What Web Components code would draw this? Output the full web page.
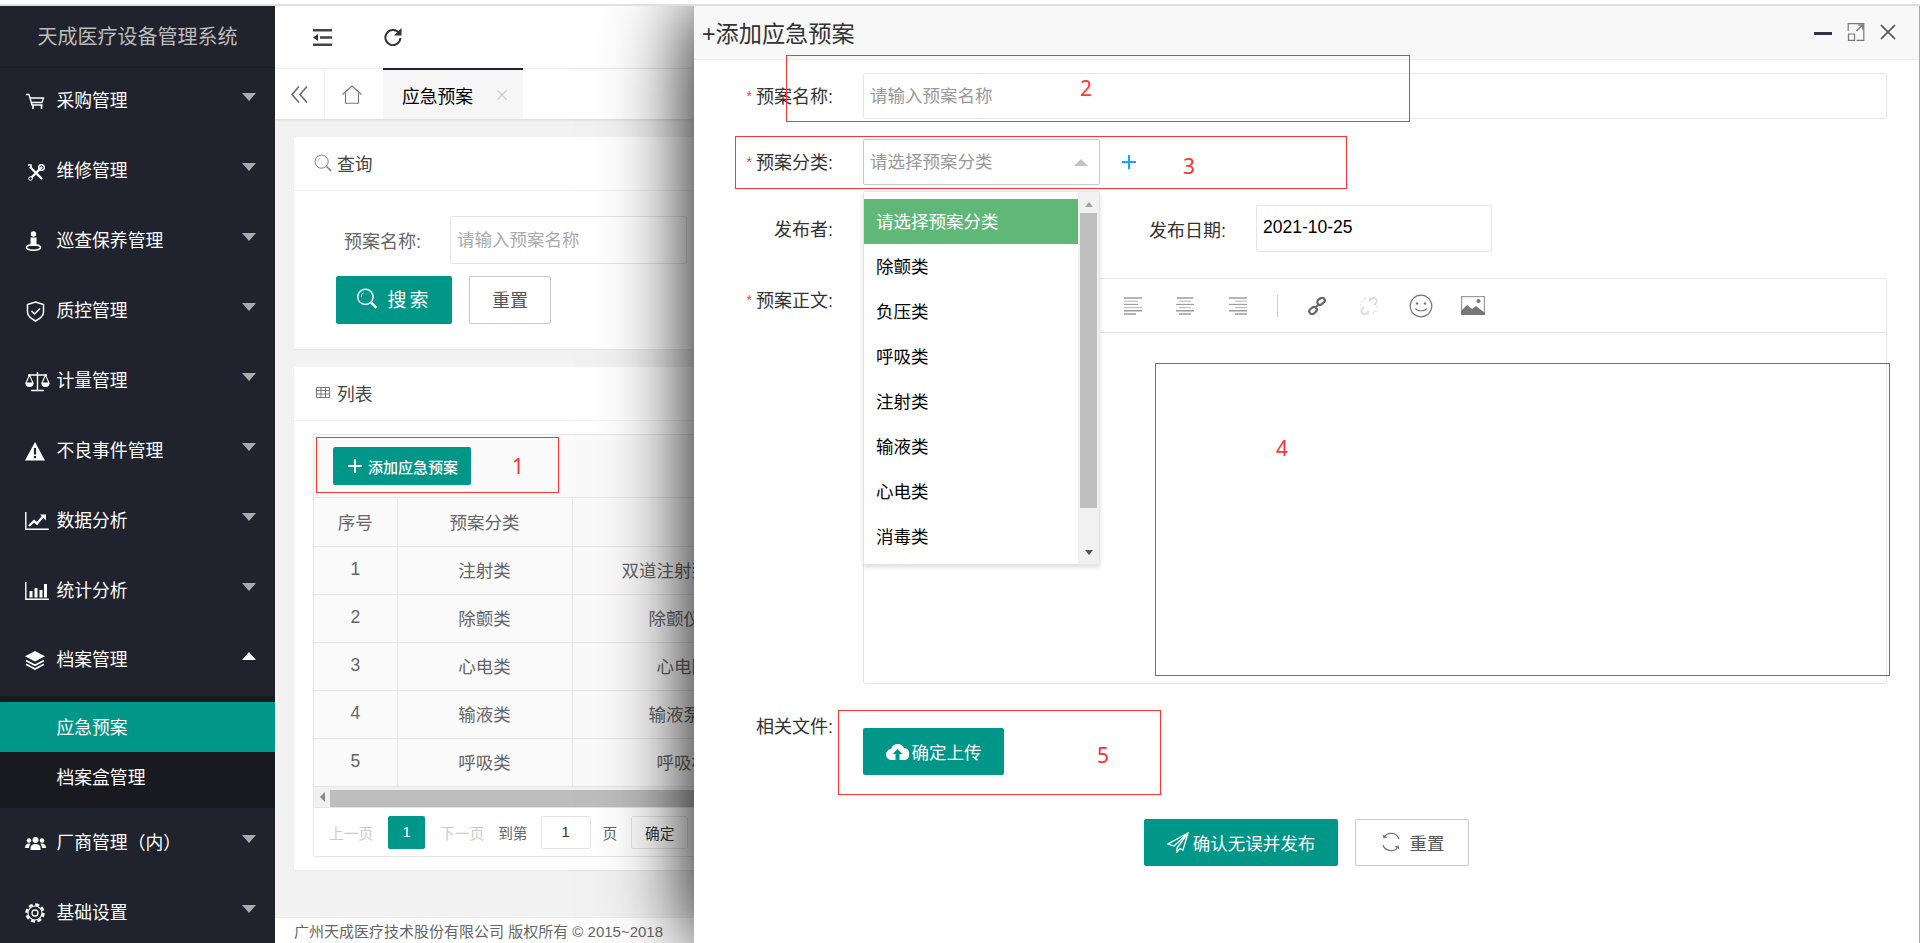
<!DOCTYPE html>
<html lang="zh-CN"><head><meta charset="utf-8"><title>应急预案</title>
<style>
html,body{margin:0;height:943px;overflow:hidden;background:#fff;font-family:"Liberation Sans","Noto Sans CJK SC",sans-serif;font-size:17.5px;}
</style></head><body>
<app-shell></app-shell>
<script>
function def(name,css,html){
  customElements.define(name,class extends HTMLElement{
    connectedCallback(){
      if(this.shadowRoot)return;
      const r=this.attachShadow({mode:'open'});
      r.innerHTML='<style>'+css+'</style>'+(typeof html==='function'?html(this):html);
    }
  });
}
const s=(w,h,b,st='')=>`<svg width="${w}" height="${h}" viewBox="0 0 ${w} ${h}" style="display:block;${st}">${b}</svg>`;
const ln='fill="none" stroke="#fff"';
const ICONS={
 cart:s(20,18,`<path d="M1 1.500h3l3 10.500h10.500M5 5h13.500l-1.500 4.500H6.500" ${ln} stroke-width="1.300"/><path d="M8 12v4M16.500 12v4" ${ln} stroke-width="1.600"/>`,'margin-top:1px'),
 tools:s(18,17,`<path d="M3 3l12 12M15 3L3 15" ${ln} stroke-width="2.400"/><path d="M1 1l3 0 0 3" ${ln} stroke-width="1.500"/><circle cx="14.500" cy="3.500" r="2.800" ${ln} stroke-width="1.500"/><circle cx="3.500" cy="14.500" r="1.800" fill="#20232d" stroke="#fff"/>`,'margin-left:2px;margin-top:2px'),
 person:s(17,20,`<circle cx="8.500" cy="3" r="2.700" fill="#fff"/><rect x="5.500" y="6.500" width="6" height="8.500" fill="#fff"/><ellipse cx="8.500" cy="16.500" rx="7" ry="2.700" ${ln} stroke-width="1.500"/>`),
 shield:s(19,21,`<path d="M9.500 1L17.500 3.500V11c0 4-4 7-8 9C5.500 18 1.500 15 1.500 11V3.500z" ${ln} stroke-width="1.500"/><path d="M5.500 10l3 3 5.500-5.500" ${ln} stroke-width="1.500"/>`,'margin-left:1px'),
 scale:s(25,21,`<path d="M12.500 1v18M6 19.500h13M3 4h19" ${ln} stroke-width="1.400"/><path d="M4.500 4L1 12h7zM20.500 4L17 12h7z" ${ln} stroke-width="1.100"/><path d="M.5 12a4 4 0 0 0 8 0zM16.500 12a4 4 0 0 0 8 0z" fill="#fff"/>`),
 warn:s(20,19,`<path d="M10 0L20 18.500H0z" fill="#fff"/><path d="M8.900 6h2.200v6.500H8.900zM8.900 14h2.200v2.200H8.900z" fill="#20232d"/>`),
 chart:s(24,18,`<path d="M.8 0v17.200H24" ${ln} stroke-width="1.400"/><path d="M4 14l5-5 3 2.500 6-7" ${ln} stroke-width="2.400"/><path d="M15 2.500h6v6z" fill="#fff"/>`),
 bars:s(24,18,`<path d="M.8 0v17.200H24" ${ln} stroke-width="1.400"/><path d="M4.500 9h3v6.500h-3zM9.500 6h3v9.500h-3zM14.500 8h3v7.500h-3zM19 2h3v13.500h-3z" fill="#fff"/>`),
 layers:s(20,19,`<path d="M10 0L20 5.200 10 10.500 0 5.200z" fill="#fff"/><path d="M1 9.500l9 4.700 9-4.700M1 13.300l9 4.700 9-4.700" ${ln} stroke-width="1.700"/>`),
 users:s(21,13,`<circle cx="10.500" cy="3" r="3" fill="#fff"/><circle cx="4" cy="3.500" r="2.300" fill="#fff"/><circle cx="17" cy="3.500" r="2.300" fill="#fff"/><path d="M5.500 13v-2c0-2.500 2-4 5-4s5 1.500 5 4v2zM0 11c0-3 1.500-4.500 4-4.500 .8 0 1.200.2 1.500.4C4.500 8 4 9.500 4 11zM21 11c0-3-1.500-4.500-4-4.500-.8 0-1.200.2-1.500.4C16.500 8 17 9.500 17 11z" fill="#fff"/>`),
 gear:s(20,20,`<circle cx="10" cy="10" r="8.500" fill="none" stroke="#fff" stroke-width="2.400" stroke-dasharray="4 2.670"/><circle cx="10" cy="10" r="7" fill="#20232d"/><circle cx="10" cy="10" r="7" ${ln} stroke-width="1.200"/><circle cx="10" cy="10" r="3" ${ln} stroke-width="1.300"/>`)
};
const mag=(w,h,c,sw)=>`<svg width="${w}" height="${h}" viewBox="0 0 20 20" style="display:block"><circle cx="8.500" cy="8.500" r="7.300" fill="none" stroke="${c}" stroke-width="${sw}"/><path d="M4.500 8.500a4 4 0 0 1 2.500-4" fill="none" stroke="${c}" stroke-width="${sw*.6}"/><path d="M14 14l5 5" stroke="${c}" stroke-width="${sw*1.600}"/></svg>`;

def('top-strip',`:host{display:block;height:2px;margin-top:4px;background:#dfdfe2;position:relative;z-index:5}`,'');

def('nav-item',`
:host{display:flex;flex:none;align-items:center;height:66px;padding-bottom:4px;padding-left:25px;padding-right:19px;color:#fff;font-size:17.8px;line-height:24px}
.i{width:31.500px;flex:none}
.t{flex:1;white-space:nowrap}
.c{width:0;height:0;border-left:7.500px solid transparent;border-right:7.500px solid transparent;border-top:8px solid #aaa;margin-top:-9px}
:host([open]) .c{border-top:0;border-bottom:8px solid #fff}
:host([open]){height:64px}
`,e=>`<span class="i">${ICONS[e.getAttribute('icon')]}</span><span class="t"><slot></slot></span><span class="c"></span>`);

def('nav-sub',`
:host{display:block;flex:none;background:#191a20;padding:6px 0;border-radius:2px}
`,`<slot></slot>`);
def('nav-subitem',`
:host{display:flex;align-items:center;height:50px;padding:0 0 2px 56.500px;box-sizing:border-box;color:#fff;font-size:17.8px}
:host([active]){background:#009688}
`,`<slot></slot>`);

def('side-nav',`
:host{display:flex;flex-direction:column;width:275px;flex:none;background:#20232d;overflow:hidden}
.b{height:62px;flex:none;display:flex;align-items:center;justify-content:center;color:#bbb;font-size:20px;border-bottom:1px solid #1c1e27;box-sizing:border-box;padding-bottom:2px}
.after{padding-top:2px;flex:none}
`,`<div class="b">天成医疗设备管理系统</div>
<nav-item icon="cart">采购管理</nav-item>
<nav-item icon="tools">维修管理</nav-item>
<nav-item icon="person">巡查保养管理</nav-item>
<nav-item icon="shield">质控管理</nav-item>
<nav-item icon="scale">计量管理</nav-item>
<nav-item icon="warn">不良事件管理</nav-item>
<nav-item icon="chart">数据分析</nav-item>
<nav-item icon="bars">统计分析</nav-item>
<nav-item icon="layers" open>档案管理</nav-item>
<nav-sub><nav-subitem active>应急预案</nav-subitem><nav-subitem>档案盒管理</nav-subitem></nav-sub>
<div class="after"><nav-item icon="users">厂商管理（内）</nav-item>
<nav-item icon="gear">基础设置</nav-item></div>`);

def('top-bar',`
:host{display:flex;align-items:center;height:62px;background:#fff;padding-left:38px;gap:52px;flex:none}
`,`<svg width="19" height="17" viewBox="0 0 19 17" style="display:block"><path d="M0 1.200h19M7 8.500h12M0 15.800h19" stroke="#444" stroke-width="2.400"/><path d="M0 8.500l5-3.500v7z" fill="#333"/></svg>
<svg width="18" height="18" viewBox="0 0 18 18" style="display:block"><path d="M15.200 5.500A7.500 7.500 0 1 0 16.400 10" fill="none" stroke="#333" stroke-width="2"/><path d="M17.500 0v7.500H10z" fill="#333"/></svg>`);

def('tab-bar',`
:host{display:flex;height:51px;background:#fff;border-top:1px solid #eee;box-sizing:border-box;flex:none;box-shadow:0 1px 3px rgba(0,0,0,.12);position:relative}
.col{width:49px;border-right:1px solid #f0f0f0;display:flex;align-items:center;justify-content:center}
.home{width:58px;display:flex;align-items:center;justify-content:center;padding-right:4px;box-sizing:border-box}
.tab{width:140px;background:#f6f6f6;border-top:2px solid #20232d;margin-top:-1px;display:flex;align-items:center;padding-left:19px;box-sizing:border-box;color:#000;font-size:17.8px}
.x{margin-left:23px;color:#ccc;display:block}
`,`<div class="col"><svg width="17" height="17" viewBox="0 0 17 17" style="display:block"><path d="M8 .5L1 8.500 8 16.500M16 .5L9 8.500 16 16.500" fill="none" stroke="#666" stroke-width="1.500"/></svg></div>
<div class="home"><svg width="20" height="19" viewBox="0 0 20 19" style="display:block"><path d="M.5 9.500L10 1l9.500 8.500M3.500 8V18.300h13V8" fill="none" stroke="#777" stroke-width="1.100"/></svg></div>
<div class="tab">应急预案<svg class="x" width="12" height="12" viewBox="0 0 12 12"><path d="M1.500 1.500l9 9M10.500 1.500l-9 9" stroke="#ccc" stroke-width="1.100"/></svg></div>`);

def('panel-card',`
:host{display:block;background:#fff;border-radius:2px;box-shadow:0 1px 2px rgba(0,0,0,.05);flex:none}
.h{height:54px;display:flex;align-items:center;gap:5px;padding-left:20px;padding-bottom:2px;border-bottom:1px solid #f2f2f2;box-sizing:border-box;color:#444;font-size:17.8px}
.ic{width:18px;display:flex;justify-content:center}
`,e=>`<div class="h"><span class="ic"><slot name="icon"></slot></span><span>${e.getAttribute('heading')}</span></div><slot></slot>`);

def('query-form',`
:host{display:block;padding:25px 0 25px 42px;height:158px;box-sizing:border-box;font-size:17.5px;color:#666}
.r{display:flex;align-items:center;padding-left:8px;height:48px}
.r>span:first-child{font-size:18px}
.inp{width:237px;height:48px;border:1px solid #e6e6e6;border-radius:2px;box-sizing:border-box;margin-left:29px;padding:0 0 3px 6px;display:flex;align-items:center;color:#aaa}
.btns{display:flex;gap:17px;margin-top:12px}
.go{width:116px;height:48px;background:#009688;color:#fff;display:flex;align-items:center;justify-content:center;gap:9px;border-radius:2px;font-size:19px;letter-spacing:3px;padding-bottom:3px;box-sizing:border-box}
.re{width:82px;height:48px;border:1px solid #c9c9c9;border-radius:2px;box-sizing:border-box;display:flex;align-items:center;justify-content:center;color:#555;font-size:18px;padding-bottom:2px}
`,`<div class="r"><span>预案名称:</span><span class="inp">请输入预案名称</span></div>
<div class="btns"><div class="go">${mag(22,21,'#fff',1.400)}<span>搜索</span></div><div class="re">重置</div></div>`);

def('data-grid',`
:host{display:block;margin:13px 19px;border:1px solid #e6e6e6;box-sizing:border-box;font-size:17.5px;color:#666;background:#fff;height:423px;overflow:hidden}
.tb{height:63px;background:#fafafa;padding:12px 0 0 19px;box-sizing:border-box;border-bottom:1px solid #e6e6e6}
.add{width:138px;height:38px;background:#009688;border-radius:2px;color:#fff;display:flex;align-items:center;padding-left:15px;box-sizing:border-box;gap:6px;font-size:15px;font-weight:500}
table{border-collapse:collapse;table-layout:fixed;width:900px;background:#fafafa}
td{height:48px;border:1px solid #e6e6e6;border-left:0;text-align:center;padding:0 0 1px;white-space:nowrap;overflow:hidden;box-sizing:border-box}
tr:first-child td{border-top:0}
td.L{text-align:left}
.bar{height:21px;background:#f1f1f1;display:flex;align-items:center;border-bottom:1px solid #e6e6e6;box-sizing:border-box}
.bar i{width:0;height:0;border-top:5px solid transparent;border-bottom:5px solid transparent;border-right:5px solid #888;margin-left:6px}
.bar b{flex:1;height:17px;background:#bdbdbd;margin-left:5px;margin-top:3px}
.pg{height:49px;display:flex;align-items:center;padding-left:15px;font-size:14.700px;color:#666;background:#fff}
.pg span{white-space:nowrap}
.off{color:#ccc}
.cur{width:37px;height:33px;background:#009688;color:#fff;border-radius:2px;display:flex;align-items:center;justify-content:center;margin:0 15px 0 15px}
.box{height:33px;border:1px solid #e6e6e6;border-radius:2px;box-sizing:border-box;display:flex;align-items:center;justify-content:center;color:#333}
`,()=>{
 const rows=[['1','注射类','双道注射泵',49],['2','除颤类','除颤仪',76],['3','心电类','心电图',84],['4','输液类','输液泵',76],['5','呼吸类','呼吸机',84]];
 return `<div class="tb"><div class="add"><svg width="14" height="14" viewBox="0 0 14 14" style="display:block"><path d="M7 0v14M0 7h14" stroke="#fff" stroke-width="1.800"/></svg><span>添加应急预案</span></div></div>
 <table><colgroup><col style="width:83px"><col style="width:175px"><col></colgroup>
 <tr><td>序号</td><td>预案分类</td><td></td></tr>
 ${rows.map(r=>`<tr><td>${r[0]}</td><td>${r[1]}</td><td class="L" style="padding-left:${r[3]}px">${r[2]}</td></tr>`).join('')}
 </table>
 <div class="bar"><i></i><b></b></div>
 <div class="pg"><span class="off">上一页</span><span class="cur">1</span><span class="off">下一页</span><span style="margin-left:14px">到第</span><span class="box" style="width:50px;margin-left:13px">1</span><span style="margin-left:12px">页</span><span class="box" style="width:57px;margin-left:14px">确定</span></div>`;
});

def('main-pane',`
:host{display:flex;flex-direction:column;flex:1;min-width:0;background:#f2f2f2}
.c{flex:1;padding:18px 20px 0 19px;display:flex;flex-direction:column;gap:18px;overflow:hidden}
.f{height:26px;background:#fff;flex:none;padding-left:19px;font-size:15px;color:#666;display:flex;align-items:center;border-top:1px solid #eee;box-sizing:border-box;white-space:nowrap}
`,`<top-bar></top-bar><tab-bar></tab-bar>
<div class="c">
<panel-card heading="查询"><span slot="icon">${mag(18,18,'#777',1)}</span><query-form></query-form></panel-card>
<panel-card heading="列表"><span slot="icon"><svg width="14" height="11" viewBox="0 0 14 11" style="display:block"><path d="M.5.5h13v10H.5zM.5 3.500h13M.5 7h13M5 .5v10M9.500.5v10" fill="none" stroke="#777"/></svg></span><data-grid></data-grid></panel-card>
</div>
<div class="f">广州天成医疗技术股份有限公司 版权所有 © 2015~2018</div>`);

def('form-row',`
:host{display:flex;align-items:center;flex:none}
.l{width:139px;flex:none;text-align:right;color:#333;font-size:18px;white-space:nowrap;margin-right:30px;margin-top:var(--lt,0);padding-top:3px;line-height:25px}
.s{color:#f33;font-size:14px;margin-right:4px;position:relative;top:-2px}
`,e=>`<span class="l">${e.hasAttribute('req')?'<span class="s">*</span>':''}${e.getAttribute('label')}:</span><slot></slot>`);

def('drop-list',`
:host{position:absolute;left:169px;top:185px;width:237px;height:374px;display:flex;background:#fff;border:1px solid #e6e6e6;border-radius:2px;box-sizing:border-box;box-shadow:0 2px 4px rgba(0,0,0,.14);z-index:3;color:#000;font-size:17.5px}
.ls{flex:1;padding-top:7px;overflow:hidden}
.o{height:45px;display:flex;align-items:center;padding:0 0 3px 12px;box-sizing:border-box}
.o.on{background:#5FB878;color:#fff}
.sb{width:21px;background:#f1f1f1;display:flex;flex-direction:column;align-items:center;flex:none}
.u{width:0;height:0;border-left:4.500px solid transparent;border-right:4.500px solid transparent;border-bottom:5px solid #a3a3a3;margin-top:10px}
.th{width:17px;height:295px;background:#bfbfbf;margin-top:6px}
.d{width:0;height:0;border-left:4.500px solid transparent;border-right:4.500px solid transparent;border-top:5px solid #555;margin-top:42px}
`,()=>`<div class="ls">${['请选择预案分类','除颤类','负压类','呼吸类','注射类','输液类','心电类','消毒类'].map((t,i)=>`<div class="o${i?'':' on'}">${t}</div>`).join('')}</div><div class="sb"><i class="u"></i><i class="th"></i><i class="d"></i></div>`);

def('edit-bar',`
:host{display:flex;align-items:center;height:54px;border-bottom:1px solid #e6e6e6;box-sizing:border-box;padding-left:260px}
svg{display:block;flex:none}
`,()=>{
 const al=(a)=>{let o='';const xs=a==='l'?[0,0,0,0,0,0]:a==='c'?[1,3,0,3,0,3]:[0,6,0,6,0,6];const ws=a==='l'?[18,14,14,18,18,12]:a==='c'?[16,12,18,12,18,12]:[18,12,18,12,18,12];
   const cols=['#777','#bbb','#999','#bbb','#777','#777'];
   for(let i=0;i<6;i++)o+=`<path d="M${xs[i]} ${1+i*3.200}h${ws[i]}" stroke="${cols[i]}" stroke-width="1.100"/>`;return o;};
 return `<svg width="18" height="18" viewBox="0 0 18 18">${al('l')}</svg>
 <svg width="18" height="18" viewBox="0 0 18 18" style="margin-left:34px">${al('c')}</svg>
 <svg width="18" height="18" viewBox="0 0 18 18" style="margin-left:35px">${al('r')}</svg>
 <svg width="1" height="22" style="margin-left:30px"><rect width="1" height="22" fill="#ccc"/></svg>
 <svg width="18" height="18" viewBox="0 0 18 18" style="margin-left:30px"><g fill="none" stroke="#666" stroke-width="2.200"><rect x="9" y="1.500" width="8" height="5.500" rx="2.700" transform="rotate(-40 13 4.200)" /><rect x="1" y="10.800" width="8" height="5.500" rx="2.700" transform="rotate(-40 5 13.500)"/><path d="M7 11l4-4"/></g></svg>
 <svg width="20" height="20" viewBox="0 0 20 20" style="margin-left:33px"><g fill="none" stroke="#ddd" stroke-width="2"><path d="M10 5l2-2a3 3 0 0 1 5 4l-2 2M10 15l-2 2a3 3 0 0 1-5-4l2-2"/><path d="M6 1v3M2 5h3M14 19v-3M18 15h-3M1 9h2M11 1v2M9 19v-2M19 11h-2" stroke-width="1.100"/></g></svg>
 <svg width="24" height="24" viewBox="0 0 24 24" style="margin-left:30px"><circle cx="12" cy="12" r="10.800" fill="none" stroke="#777" stroke-width="1.200"/><circle cx="8" cy="9.500" r="1.200" fill="#777"/><circle cx="16" cy="9.500" r="1.200" fill="#777"/><path d="M6.500 14.500c1.500 3 9.500 3 11 0" fill="none" stroke="#777" stroke-width="1.200"/></svg>
 <svg width="24" height="19" viewBox="0 0 24 19" style="margin-left:28px"><rect x=".6" y=".6" width="22.800" height="17.800" fill="#fff" stroke="#999" stroke-width="1.200"/><path d="M0 19v-4l6-6 5 4 4-3 9 7v2z" fill="#777"/><circle cx="17.500" cy="5" r="2" fill="#777"/></svg>`;
});

def('form-modal',`
:host{position:absolute;left:694px;top:6px;right:0;bottom:0;background:#fff;box-shadow:0 0 80px #000;clip-path:inset(0 0 0 -300px);border-right:1px solid #aaa;box-sizing:border-box;z-index:2;display:block;font-size:17.5px}
.head{height:54px;background:#f8f8f8;border-bottom:1px solid #eee;box-sizing:border-box;display:flex;align-items:center;padding:0 23px 2px 8px;color:#333}
.ti{flex:1;font-size:23.200px;white-space:nowrap}
.body{display:flex;flex-direction:column;padding-top:13px}
.inp{border:1px solid #e6e6e6;border-radius:2px;box-sizing:border-box;height:46px;display:flex;align-items:center;padding:0 0 3px 6px;color:#999}
.sel{width:237px;border-color:#c9c9c9;justify-content:space-between;padding-right:11px}
.car{width:0;height:0;border-left:7px solid transparent;border-right:7px solid transparent;border-bottom:7px solid #c2c2c2;margin-top:3px}
.ed{flex:none;width:1024px;height:406px;border:1px solid #e6e6e6;box-sizing:border-box;border-radius:2px}
.btn{height:47px;border-radius:2px;display:flex;align-items:center;box-sizing:border-box;justify-content:center;color:#fff;background:#009688;padding-bottom:1px}
.pub{gap:4px}
.gh{background:#fff;border:1px solid #c9c9c9;color:#555;gap:8px}
.actions{display:flex;gap:17px;margin:44px 0 0 450px}
`,`<div class="head"><span class="ti">+添加应急预案</span>
<svg width="18" height="3" style="display:block;margin-top:4px"><rect width="18" height="3" fill="#2f3448"/></svg>
<svg width="18" height="18" viewBox="0 0 17 18" style="display:block;margin-left:15px"><path d="M.7 8V.7H16.300V17.300H9M1 17.300V11H7V17.300zM9 8l6-6M10.500 2h4.500v4.500" fill="none" stroke="#777" stroke-width="1.200"/></svg>
<svg width="16" height="16" viewBox="0 0 15 15" style="display:block;margin-left:15px"><path d="M1 1l13 13M14 1L1 14" stroke="#555" stroke-width="1.500"/></svg></div>
<div class="body">
<form-row label="预案名称" req><div class="inp" style="width:1024px">请输入预案名称</div></form-row>
<form-row label="预案分类" req style="margin-top:20px"><div class="inp sel"><span>请选择预案分类</span><i class="car"></i></div><svg width="14" height="14" viewBox="0 0 14 14" style="display:block;margin-left:22px"><path d="M7 0v14M0 7h14" stroke="#1E9FFF" stroke-width="2"/></svg></form-row>
<form-row label="发布者" style="margin-top:20px"><div class="inp" style="width:236px;height:47px;margin-right:50px"></div><span style="color:#333;white-space:nowrap;width:77px;font-size:18px">发布日期:</span><div class="inp" style="width:236px;height:47px;margin-left:30px;color:#000">2021-10-25</div></form-row>
<form-row label="预案正文" req style="margin-top:26px;align-items:flex-start;--lt:8px"><div class="ed"><edit-bar></edit-bar></div></form-row>
<form-row label="相关文件" style="margin-top:44px;align-items:flex-start;--lt:-16px"><div class="btn" style="width:141px;gap:3px;font-size:17.5px"><svg width="23" height="18" viewBox="0 0 23 18" style="display:block"><path d="M6 18a5.500 5.500 0 0 1-1-11A7 7 0 0 1 18 6a6 6 0 0 1-.5 12z" fill="#fff"/><path d="M11.500 7l-5 5h3v6h4v-6h3z" fill="#009688"/></svg><span>确定上传</span></div></form-row>
<div class="actions"><div class="btn pub" style="width:194px"><svg width="22" height="21" viewBox="0 0 22 21" style="display:block"><path d="M21 1L1 12l6 2L21 1 10 16v4l3-3.500 3 1.500z" fill="none" stroke="#fff" stroke-width="1.300"/></svg><span>确认无误并发布</span></div>
<div class="btn gh" style="width:114px"><svg width="22" height="22" viewBox="0 0 22 22" style="display:block"><path d="M19 8A8.500 8.500 0 0 0 4 6M3 14a8.500 8.500 0 0 0 15 2" fill="none" stroke="#777" stroke-width="1.300"/><path d="M2.500 3.500l1 4 4-1zM19.500 18.500l-1-4-4 1z" fill="#777"/></svg><span>重置</span></div></div>
</div><drop-list></drop-list>`);

def('note-box',`
:host{position:absolute;border:1px solid #f33;box-sizing:border-box;z-index:4;pointer-events:none;left:var(--x);top:var(--y);width:var(--w);height:var(--h)}
span{position:absolute;color:#f33;font:21px "Noto Sans",sans-serif;line-height:24px;transform:translate(-50%,-50%);left:var(--nx);top:var(--ny)}
`,e=>`<span>${e.getAttribute('n')}</span>`);

def('app-shell',`
:host{display:block;position:relative;width:1920px;height:943px;overflow:hidden}
.row{display:flex;height:937px}
`,()=>{
 const notes=[['1',316,437,243,56,517,465],['2',786,55,624,67,1085,87],['3',735,136,612,53,1188,165],['4',1155,363,735,313,1281,447],['5',838,710,323,85,1102,754]];
 return `<top-strip></top-strip><div class="row"><side-nav></side-nav><main-pane></main-pane></div><form-modal></form-modal>
 ${notes.map(n=>`<note-box n="${n[0]}" style="--x:${n[1]}px;--y:${n[2]}px;--w:${n[3]}px;--h:${n[4]}px;--nx:${n[5]-n[1]}px;--ny:${n[6]-n[2]}px"></note-box>`).join('')}`;
});
</script>
</body></html>
